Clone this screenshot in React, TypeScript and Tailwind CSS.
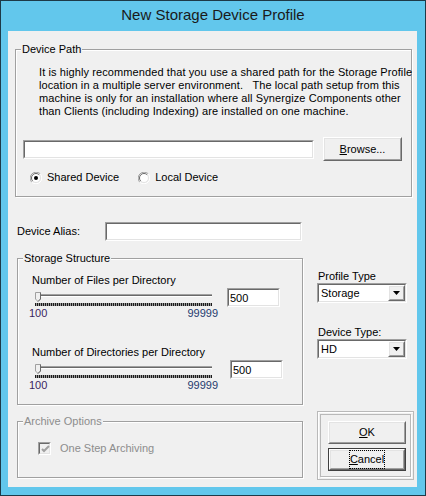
import type { ReactNode } from 'react';
import clsx from 'clsx';

const font = { fontFamily: '"Liberation Sans", Arial, sans-serif' };

function Sunken({ className, inner, children }: { className?: string; inner?: string; children?: ReactNode }) {
  return (
    <div className={clsx('border border-t-[#a0a0a0] border-l-[#a0a0a0] border-b-white border-r-white', className)}>
      <div className={clsx('h-full w-full border border-t-[#696969] border-l-[#696969] border-b-[#e3e3e3] border-r-[#e3e3e3]', inner ?? 'bg-white')}>
        {children}
      </div>
    </div>
  );
}

function Raised({ className, children }: { className?: string; children?: ReactNode }) {
  return (
    <div className={clsx('border border-t-white border-l-white border-b-[#696969] border-r-[#696969]', className)}>
      <div className="flex h-full w-full items-center justify-center border border-t-[#e3e3e3] border-l-[#e3e3e3] border-b-[#a0a0a0] border-r-[#a0a0a0] bg-[#f0f0f0]">
        {children}
      </div>
    </div>
  );
}

function Group({ title, className, disabled, children }: { title: string; className?: string; disabled?: boolean; children?: ReactNode }) {
  return (
    <div className={clsx('relative border border-[#a0a0a0] shadow-[inset_1px_1px_0_#fff,1px_1px_0_#fff]', className)}>
      <span className={clsx('absolute -top-[7px] left-[5px] bg-[#f0f0f0] px-[1px] leading-[13px]', disabled ? 'text-[#8d8d8d]' : 'text-black')}>
        {title}
      </span>
      {children}
    </div>
  );
}

function Radio({ checked }: { checked?: boolean }) {
  return (
    <svg width="12" height="12" viewBox="0 0 12 12">
      <path d="M10.24 1.76A6 6 0 0 0 1.76 10.24" fill="none" stroke="#a0a0a0" strokeWidth="1" />
      <path d="M1.76 10.24A6 6 0 0 0 10.24 1.76" fill="none" stroke="#fff" strokeWidth="1" />
      <circle cx="6" cy="6" r="4.5" fill="#fff" />
      <path d="M9.2 2.8A4.5 4.5 0 0 0 2.8 9.2" fill="none" stroke="#696969" strokeWidth="1" />
      <path d="M2.8 9.2A4.5 4.5 0 0 0 9.2 2.8" fill="none" stroke="#e3e3e3" strokeWidth="1" />
      {checked && <circle cx="6" cy="6" r="2" fill="#000" />}
    </svg>
  );
}

function Slider() {
  return (
    <div className="w-[189px]">
      <div className="relative mx-[6px] h-[16px]">
        <div className="absolute left-0 right-0 top-[7px] h-[1px] bg-[#a0a0a0]" />
        <div className="absolute left-0 right-0 top-[8px] h-[1px] bg-[#696969]" />
        <div className="absolute left-0 right-0 top-[9px] h-[1px] bg-white" />
        <svg className="absolute left-0 top-[5px]" width="6" height="10" viewBox="0 0 6 10">
          <path d="M0.5 0.5H5.5V7L3 9.5L0.5 7Z" fill="#f0f0f0" stroke="#a0a0a0" />
          <path d="M5.5 0.5V7L3 9.5" fill="none" stroke="#696969" />
        </svg>
      </div>
      <div className="mx-[6px] h-[3px] bg-[repeating-linear-gradient(90deg,#1a1a1a_0_1px,#9a9a9a_1px_2px)]" />
      <div className="mt-[1px] flex justify-between leading-[13px]">
        <span className="text-[#3b1f5e]">100</span>
        <span className="text-[#1f3b6e]">99999</span>
      </div>
    </div>
  );
}

function Combo({ value }: { value: string }) {
  return (
    <Sunken className="h-[20px] w-[90px]">
      <div className="flex h-full items-center pl-[2px]">
        <span className="flex-1 leading-[13px]">{value}</span>
        <Raised className="h-[16px] w-[17px]">
          <svg width="7" height="4" viewBox="0 0 7 4">
            <path d="M0 0H7L3.5 4Z" fill="#000" />
          </svg>
        </Raised>
      </div>
    </Sunken>
  );
}

export default function App() {
  return (
    <div className="h-[496px] w-[426px] overflow-hidden border border-[#1d3a48] bg-[#62c7ec] text-[11px] text-black" style={font}>
      <div className="flex h-[30px] items-center justify-center pb-[1px] text-[15px] text-[#1a1a1a]">New Storage Device Profile</div>
      <div className="ml-[7px] flex h-[456px] w-[409px] flex-col bg-[#f0f0f0]">
        <Group title="Device Path" className="ml-[7px] mt-[18px] h-[148px] w-[397px]">
          <div className="pl-[23px] pt-[16px] leading-[13px] tracking-[0.1px] whitespace-pre">
            <div>It is highly recommended that you use a shared path for the Storage Profile</div>
            <div>location in a multiple server environment.   The local path setup from this</div>
            <div>machine is only for an installation where all Synergize Components other</div>
            <div>than Clients (including Indexing) are installed on one machine.</div>
          </div>
          <div className="mt-[19px] flex h-[24px] items-center pl-[7px]">
            <Sunken className="h-[19px] w-[291px]" />
            <Raised className="ml-[9px] h-[24px] w-[79px]">
              <span><span className="underline underline-offset-1">B</span>rowse...</span>
            </Raised>
          </div>
          <div className="mt-[10px] flex items-center pl-[14px] leading-[13px]">
            <Radio checked />
            <span className="ml-[5px]">Shared Device</span>
            <span className="ml-[19px]"><Radio /></span>
            <span className="ml-[5px]">Local Device</span>
          </div>
        </Group>

        <div className="ml-[9px] mt-[25px] flex h-[19px] items-center">
          <span className="w-[88px] leading-[13px]">Device Alias:</span>
          <Sunken className="h-[19px] w-[197px]" />
        </div>

        <div className="mt-[17px] flex">
          <div className="ml-[9px] w-[286px]">
            <Group title="Storage Structure" className="h-[147px] w-[286px]">
              <div className="pl-[14px] pt-[15px] leading-[13px]">Number of Files per Directory</div>
              <div className="flex items-start pl-[11px]">
                <Slider />
                <Sunken className="ml-[9px] mt-[1px] h-[19px] w-[53px]">
                  <div className="pl-[1px] pt-[2px] leading-[13px]">500</div>
                </Sunken>
              </div>
              <div className="mt-[26px] pl-[14px] leading-[13px]">Number of Directories per Directory</div>
              <div className="flex items-start pl-[11px]">
                <Slider />
                <Sunken className="ml-[12px] mt-[1px] h-[19px] w-[53px]">
                  <div className="pl-[1px] pt-[2px] leading-[13px]">500</div>
                </Sunken>
              </div>
            </Group>
            <Group title="Archive Options" disabled className="mt-[16px] h-[57px] w-[286px]">
              <div className="flex items-center pl-[20px] pt-[20px]">
                <Sunken className="h-[13px] w-[13px]" inner="bg-[#f0f0f0]">
                  <svg width="11" height="11" viewBox="0 0 11 11">
                    <path d="M2 5L4 7L9 2" fill="none" stroke="#a0a0a0" strokeWidth="2" />
                  </svg>
                </Sunken>
                <span className="ml-[9px] leading-[13px] text-[#8d8d8d]">One Step Archiving</span>
              </div>
            </Group>
          </div>

          <div className="ml-[14px] flex flex-col">
            <div className="mt-[12px] pl-[1px] leading-[13px]">Profile Type</div>
            <Combo value="Storage" />
            <div className="mt-[23px] pl-[1px] leading-[13px]">Device Type:</div>
            <Combo value="HD" />
            <div className="mt-[52px] h-[69px] w-[97px] border border-[#b9b9b9] p-[2px] shadow-[inset_1px_1px_0_#fff]">
              <div className="flex h-full w-full flex-col border border-[#b9b9b9] pl-[7px] pt-[6px] shadow-[1px_1px_0_#fff]">
                <Raised className="h-[23px] w-[78px]">
                  <span><span className="underline underline-offset-1">O</span>K</span>
                </Raised>
                <div className="mt-[4px] h-[23px] w-[78px] border border-[#404040]">
                  <Raised className="h-full w-full">
                    <span className="outline-1 outline-dotted outline-black">
                      <span className="underline underline-offset-1">C</span>ancel
                    </span>
                  </Raised>
                </div>
              </div>
            </div>
          </div>
        </div>
      </div>
    </div>
  );
}
